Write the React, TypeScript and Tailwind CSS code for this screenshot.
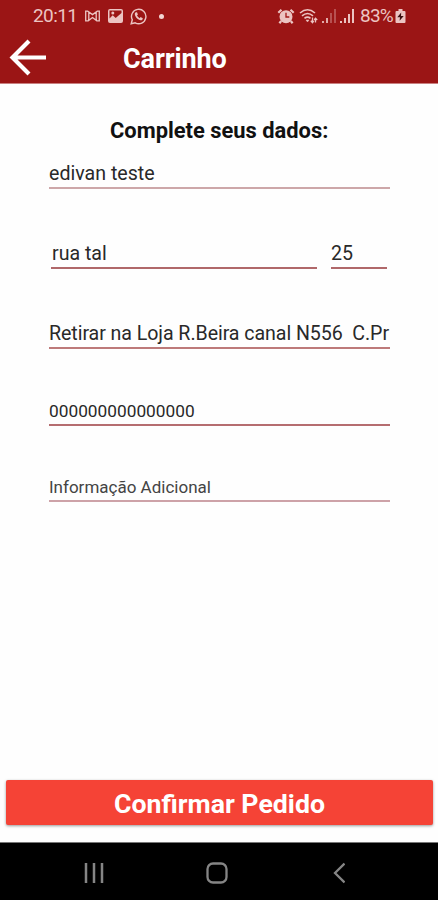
import React from 'react';

function StatusBar() {
  return (
    <div className="flex h-8 shrink-0 items-center pl-[33px] text-[#ecc4c2]">
      <span className="w-[51px] text-[19px] leading-8 tracking-[-0.6px] whitespace-nowrap">20:11</span>
      <svg className="mr-1.5 h-4 w-[17px]" viewBox="0 0 17 16" fill="none" stroke="currentColor">
        <path d="M1.7 3.2h2l4.8 3.4 4.800-3.400h2v9.600h-2.500L8.500 9.600l-4.300 3.200H1.700zM4.800 4.500v7.500M12.200 4.500v7.500" strokeWidth="1.300" />
      </svg>
      <svg className="mr-1.5 h-4 w-[17px]" viewBox="0 0 17 16">
        <path
          fillRule="evenodd"
          fill="currentColor"
          d="M3 1h11a2 2 0 0 1 2 2v10a2 2 0 0 1-2 2H3a2 2 0 0 1-2-2V3a2 2 0 0 1 2-2zm-.5 1.500v8l3.200-3.200 3 2.700 5.800-5V2.500z"
        />
        <circle cx="5.800" cy="5" r="1.500" fill="currentColor" />
      </svg>
      <svg className="h-[17px] w-[17px]" viewBox="0 0 17 17" fill="none">
        <path d="M1.200 15.800l1.100-4A7.200 7.200 0 1 1 5.200 14.800z" stroke="currentColor" strokeWidth="1.400" />
        <path
          d="M5.800 4.300c-1.400.9-1.200 2.600-.2 4.200 1.200 2 2.900 3.400 4.900 3.800 1.400.2 2.400-.9 2.300-2.100L10.600 9l-1 1.200C8.500 9.700 7.600 8.800 7 7.600l.9-1.100-.9-2.200z"
          fill="currentColor"
        />
      </svg>
      <span className="ml-3 h-[5px] w-[5px] rounded-full bg-[#f3d5d3]" />
      <svg className="mr-1 ml-[113px] h-[17px] w-[18px]" viewBox="0 0 18 17">
        <path d="M1.300 4.800l3.200-3M16.700 4.800l-3.200-3M4.200 13l-1.800 2.300M13.800 13l1.800 2.300" stroke="currentColor" strokeWidth="2.200" />
        <circle cx="9" cy="8.700" r="6.500" fill="currentColor" />
        <path d="M9 4.700v4.300h3.300" stroke="#a01717" strokeWidth="1.300" fill="none" />
      </svg>
      <svg className="mr-1 h-[17px] w-[19px]" viewBox="0 0 19 17" fill="none" stroke="currentColor">
        <path d="M1 5Q8.500-1.500 16 5M3 7.800q5.500-4.600 11 0M5.500 10.300q3-2.500 6 0" strokeWidth="1.600" />
        <path d="M7 12h3l-1.500 2z" fill="currentColor" strokeWidth="0.500" />
        <path d="M13.500 9.500v5M11.800 12.800l1.700 1.900 1.300-1.900M16.500 14.500v-4M15.200 12l1.300-1.800 1.700 1.800" strokeWidth="1.300" />
      </svg>
      <svg className="mr-1 h-4 w-[14px]" viewBox="0 0 14 16" fill="currentColor">
        <path d="M0 13h2v2H0zM4 10h2v5H4z" opacity="0.850" />
        <path d="M8 5h2v10H8zM12 1h2v14h-2z" opacity="0.350" />
      </svg>
      <svg className="mr-1.5 h-4 w-[14px]" viewBox="0 0 14 16" fill="currentColor">
        <path d="M0 13h2v2H0zM4 10h2v5H4zM8 6h2v9H8zM12 1h2v14h-2z" />
      </svg>
      <span className="w-[35px] text-[19px] leading-8 tracking-[-0.8px] whitespace-nowrap">83%</span>
      <svg className="h-4 w-[11px]" viewBox="0 0 11 16">
        <path d="M3.500 1h4v2H9.500a1 1 0 0 1 1 1v10a1 1 0 0 1-1 1h-8a1 1 0 0 1-1-1V4a1 1 0 0 1 1-1h2z" fill="currentColor" />
        <path d="M6.200 4.600L2.300 9.300H5l-.4 3.500L8.700 8H6z" fill="#3a1010" />
      </svg>
    </div>
  );
}

export default function App() {
  return (
    <div className="flex h-[900px] w-[438px] flex-col overflow-hidden bg-[#fefefe] font-['Roboto',sans-serif]">
      <header className="flex h-[84px] shrink-0 flex-col border-b border-[#c98080] bg-[#9b1515]">
        <StatusBar />
        <div className="flex h-[51px] items-center pl-[9px] text-white">
          <svg className="h-[38px] w-[38px]" viewBox="0 0 38 38" fill="none" stroke="currentColor" strokeWidth="4.2">
            <path d="M20 2L3.500 18.500L20 35M3.500 18.500H37" />
          </svg>
          <h1 className="mt-1 ml-[76px] text-[27px] font-bold tracking-[-0.1px]">Carrinho</h1>
        </div>
      </header>

      <main className="flex grow flex-col text-[19.6px] leading-[26px] text-[#292929]">
        <h2 className="mt-[35px] pl-[110px] text-[21.9px] leading-6 font-bold text-[#111] whitespace-nowrap">Complete seus dados:</h2>
        <div className="mt-[18px] mr-12 ml-[49px] h-[28px] border-b-2 border-[#cda7a9]">edivan teste</div>
        <div className="mt-[52px] mr-[51px] ml-[51px] flex gap-[14px]">
          <div className="h-[28px] w-[266px] border-b-2 border-[#b0686a] pl-px">rua tal</div>
          <div className="h-[28px] grow border-b-2 border-[#b0686a]">25</div>
        </div>
        <div className="mt-[52px] mr-12 ml-[49px] h-[28px] border-b-2 border-[#bd7a7a] tracking-[-0.06px] whitespace-pre">
          Retirar na Loja R.Beira canal N556  C.Pr
        </div>
        <div className="mt-[50px] mr-12 ml-[49px] h-[27px] border-b-2 border-[#b56d70] text-[17.3px] leading-6">000000000000000</div>
        <div className="mt-[49px] mr-12 ml-[49px] h-[27px] border-b-2 border-[#cda2a8] text-[17px] leading-6 text-[#444]">Informação Adicional</div>
      </main>

      <button className="mr-[5px] mb-[17px] ml-[6px] h-[45px] shrink-0 rounded-xs bg-[#f54336] pt-0.5 text-[26.7px] leading-[45px] font-bold text-white shadow-[0_1px_3px_rgba(0,0,0,0.4)]">
        Confirmar Pedido
      </button>

      <nav className="flex h-[58px] shrink-0 items-center border-t border-[#777] bg-black pt-0.5 pl-[84px] text-[#858585]">
        <svg className="h-5 w-5" viewBox="0 0 20 20" stroke="currentColor" strokeWidth="2.5">
          <path d="M2 0v20M10 0v20M18 0v20" />
        </svg>
        <svg className="ml-[102px] h-[22px] w-[22px]" viewBox="0 0 22 22" fill="none" stroke="currentColor" strokeWidth="2.3">
          <rect x="1.5" y="1.5" width="19" height="19" rx="5.5" />
        </svg>
        <svg className="ml-[105px] h-[22px] w-3" viewBox="0 0 12 22" fill="none" stroke="currentColor" strokeWidth="2.3">
          <path d="M11.500 1.500L2 11L11.500 20.500" />
        </svg>
      </nav>
    </div>
  );
}
